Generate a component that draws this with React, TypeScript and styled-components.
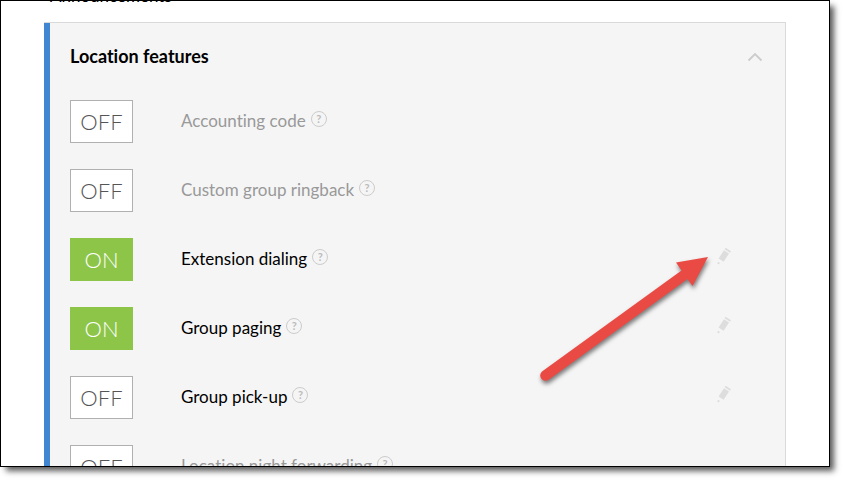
import React, { useState } from "react";
import styled, { createGlobalStyle } from "styled-components";

const GlobalStyle = createGlobalStyle`
  * { box-sizing: border-box; }
  body {
    margin: 0;
    background: #fff;
    color: #000;
    font-family: Lato, "Open Sans", sans-serif;
    font-variant-ligatures: none;
  }
`;

const Page = styled.div`
  height: 100vh;
  padding: 0 15px 15px 0;
  overflow: hidden;
`;

const Frame = styled.main`
  height: 100%;
  overflow: hidden;
  border: 1px solid #000;
  background: #fff;
  padding: 0 43px;
  box-shadow: 5px 5px 6px -1px rgba(0, 0, 0, 0.65);
`;

const PreviousSection = styled.div`
  display: flex;
  height: 21px;
  padding-left: 6px;
  font-size: 17px;
  line-height: 20px;
`;

const PreviousTitle = styled.div`
  margin-top: -15px;
`;

const Panel = styled.section`
  border: 1px solid #dadada;
  border-left: 0;
  box-shadow: inset 6px 0 0 #4086d0;
  background: #f5f5f5;
  padding: 0 20px 0 26px;
`;

const PanelHeader = styled.header`
  display: flex;
  align-items: center;
  justify-content: space-between;
  height: 68px;
  margin-bottom: 9px;
`;

const Title = styled.h2`
  margin: 0;
  font-size: 18px;
  line-height: 24px;
  padding-bottom: 2px;
  font-weight: 700;
`;

const IconButton = styled.button`
  display: flex;
  padding: 0;
  border: 0;
  background: none;
  cursor: pointer;
`;

const CollapseButton = styled(IconButton)`
  margin-right: 2px;
`;

const List = styled.ul`
  display: grid;
  gap: 26px;
  margin: 0;
  padding: 0 0 26px;
  list-style: none;
`;

const Row = styled.li`
  position: relative;
  display: grid;
  grid-template-columns: 63px 1fr auto;
  column-gap: 48px;
  align-items: center;
  height: 43px;
`;

const Toggle = styled.button<{ $on: boolean }>`
  height: 43px;
  padding: 0;
  border: 1px solid ${(p) => (p.$on ? "#8dc549" : "#b0b0b0")};
  background: ${(p) => (p.$on ? "#8dc549" : "#fff")};
  color: ${(p) => (p.$on ? "#fff" : "#555")};
  font-family: inherit;
  font-size: 22px;
  font-weight: 300;
  line-height: 28px;
  cursor: pointer;
`;

const LabelGroup = styled.div`
  display: flex;
  align-items: center;
  gap: 5px;
  padding-bottom: 2px;
`;

const Label = styled.label<{ $muted: boolean }>`
  font-size: 17px;
  line-height: 24px;
  color: ${(p) => (p.$muted ? "#999" : "#000")};
`;

const HelpButton = styled.button`
  width: 16px;
  height: 16px;
  margin-bottom: 4px;
  padding: 0;
  border: 1px solid #ccc;
  border-radius: 50%;
  background: none;
  color: #bbb;
  font-family: inherit;
  font-size: 11px;
  font-weight: 700;
  line-height: 14px;
  text-align: center;
  cursor: pointer;
`;

const EditButton = styled(IconButton)`
  margin: 0 34px 8px 0;
`;

const Pointer = styled.svg`
  position: absolute;
  right: 55px;
  top: 10px;
  pointer-events: none;
  filter: drop-shadow(1px 3px 2px rgba(0, 0, 0, 0.5));
`;

const Chevron = () => (
  <svg width="16" height="10" viewBox="0 0 16 10" fill="none" stroke="#ccc" strokeWidth="1.800">
    <path d="M1.500 8.500 8 2l6.500 6.500" />
  </svg>
);

const Pencil = () => (
  <svg width="14" height="18" viewBox="0 0 14 18" fill="#ddd">
    <path d="M7 3.200 12 6.500 6.600 14.800 1.600 11.500z" />
    <path d="M8.600 0.800 14 4.300 13 5.800 7.600 2.300z" />
    <circle cx="1.500" cy="16.200" r="1.100" />
  </svg>
);

const Arrow = () => (
  <Pointer width="170" height="134" viewBox="0 0 170 134" fill="#ea4a44" aria-hidden="true">
    <path d="M168 9 152.500 38 147.500 31 9 131.500A5 5 0 0 1 2 123.500L141.500 22.500 136 14.500z" />
  </Pointer>
);

type Feature = { id: string; name: string; on?: boolean; muted?: boolean; edit?: boolean; marked?: boolean };

const features: Feature[] = [
  { id: "accounting", name: "Accounting code", muted: true },
  { id: "ringback", name: "Custom group ringback", muted: true },
  { id: "extension", name: "Extension dialing", on: true, edit: true, marked: true },
  { id: "paging", name: "Group paging", on: true, edit: true },
  { id: "pickup", name: "Group pick-up", edit: true },
  { id: "night", name: "Location night forwarding", muted: true },
];

function FeatureRow({ feature }: { feature: Feature }) {
  const [on, setOn] = useState(!!feature.on);
  return (
    <Row>
      <Toggle id={feature.id} type="button" role="switch" aria-checked={on} $on={on} onClick={() => setOn(!on)}>
        {on ? "ON" : "OFF"}
      </Toggle>
      <LabelGroup>
        <Label htmlFor={feature.id} $muted={!!feature.muted}>{feature.name}</Label>
        <HelpButton type="button" aria-label={`Help: ${feature.name}`}>?</HelpButton>
      </LabelGroup>
      {feature.edit && (
        <EditButton type="button" aria-label={`Edit ${feature.name}`}>
          <Pencil />
        </EditButton>
      )}
      {feature.marked && <Arrow />}
    </Row>
  );
}

export default function App() {
  return (
    <Page>
      <GlobalStyle />
      <Frame>
        <PreviousSection>
          <PreviousTitle>Announcements</PreviousTitle>
        </PreviousSection>
        <Panel>
          <PanelHeader>
            <Title>Location features</Title>
            <CollapseButton type="button" aria-label="Collapse location features">
              <Chevron />
            </CollapseButton>
          </PanelHeader>
          <List>
            {features.map((f) => (
              <FeatureRow key={f.id} feature={f} />
            ))}
          </List>
        </Panel>
      </Frame>
    </Page>
  );
}
